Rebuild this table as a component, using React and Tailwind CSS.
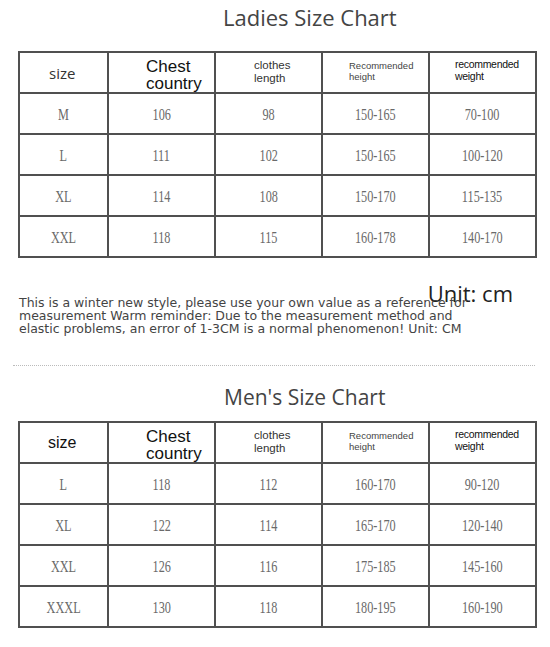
const ladies = [
  ['M', '106', '98', '150-165', '70-100'],
  ['L', '111', '102', '150-165', '100-120'],
  ['XL', '114', '108', '150-170', '115-135'],
  ['XXL', '118', '115', '160-178', '140-170'],
];

const men = [
  ['L', '118', '112', '160-170', '90-120'],
  ['XL', '122', '114', '165-170', '120-140'],
  ['XXL', '126', '116', '175-185', '145-160'],
  ['XXXL', '130', '118', '180-195', '160-190'],
];

const cell = 'border-2 border-[#505050] h-[41px] p-0 text-center align-middle';
const head = 'border-2 border-[#505050] h-[41px] p-0 text-left align-middle';

const SizeTable = ({ rows, sizeClass }) => (
  <table className="table-fixed border-collapse ml-[18px] w-[517px]">
    <colgroup>
      <col className="w-[89px]" />
      <col className="w-[107px]" />
      <col className="w-[107px]" />
      <col className="w-[107px]" />
      <col className="w-[107px]" />
    </colgroup>
    <thead>
      <tr>
        <td className={head}>
          <span className={sizeClass}>size</span>
        </td>
        <td className={head}>
          <div className="pl-[37px] text-[17px] leading-[17px] text-[#111] font-['Liberation_Sans',sans-serif] pt-[4px]">
            Chest
            <br />
            country
          </div>
        </td>
        <td className={head}>
          <div className="pl-[38px] text-[11.5px] leading-[13px] text-[#333] font-['Liberation_Sans',sans-serif] -mt-[2px]">
            clothes
            <br />
            length
          </div>
        </td>
        <td className={head}>
          <div className="pl-[26px] text-[9.5px] leading-[11px] text-[#444] font-['Liberation_Sans',sans-serif] -mt-[4px]">
            Recommended
            <br />
            height
          </div>
        </td>
        <td className={head}>
          <div className="pl-[25px] text-[10.5px] leading-[12px] text-[#111] font-['Liberation_Sans',sans-serif] tracking-[-0.3px] -mt-[6px]">
            recommended
            <br />
            weight
          </div>
        </td>
      </tr>
    </thead>
    <tbody>
      {rows.map((r) => (
        <tr key={r[0]}>
          {r.map((v, i) => (
            <td key={i} className={cell}>
              <span className="inline-block scale-x-[0.72] text-[17px] leading-none text-[#6a6a6a] font-['Liberation_Serif',serif]">
                {v}
              </span>
            </td>
          ))}
        </tr>
      ))}
    </tbody>
  </table>
);

export default function App() {
  return (
    <div className="w-[550px] h-[647px] bg-white overflow-hidden font-['Open_Sans',sans-serif]">
      <h1 className="pl-[223px] pt-[2px] text-[22px] leading-[30px] text-[#444] font-normal">
        Ladies Size Chart
      </h1>
      <div className="mt-[19px]">
        <SizeTable
          rows={ladies}
          sizeClass="pl-[29px] text-[15px] text-[#333] font-['Open_Sans',sans-serif]"
        />
      </div>

      <div className="mt-[20px] flex justify-end pr-[37px]">
        <span className="text-[22px] leading-[30px] text-[#222] font-['Open_Sans',sans-serif]">
          Unit: cm
        </span>
      </div>
      <p className="-mt-[12px] pl-[19px] text-[12.5px] leading-[13px] text-[#444] font-['DejaVu_Sans',sans-serif]">
        This is a winter new style, please use your own value as a reference for
        <br />
        measurement Warm reminder: Due to the measurement method and
        <br />
        elastic problems, an error of 1-3CM is a normal phenomenon! Unit: CM
      </p>

      <div className="mt-[30px] ml-[13px] w-[522px] border-t border-dotted border-[#bbb]" />

      <h2 className="pl-[224px] mt-[16px] text-[21px] leading-[30px] text-[#444] font-normal">
        Men's Size Chart
      </h2>
      <div className="mt-[9px]">
        <SizeTable
          rows={men}
          sizeClass="pl-[28px] text-[16px] text-[#111] font-['Liberation_Sans',sans-serif]"
        />
      </div>
    </div>
  );
}
